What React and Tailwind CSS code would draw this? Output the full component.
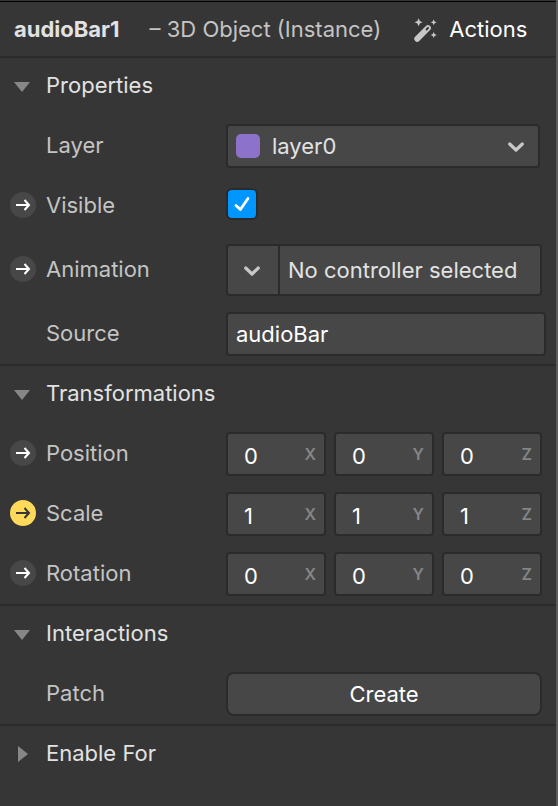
import React, { useState } from "react";

function Chevron() {
  return (
    <svg width="18" height="12" viewBox="0 0 18 12" fill="none" stroke="#c8c8c8" strokeWidth="3.2" strokeLinecap="round" strokeLinejoin="round" aria-hidden="true">
      <path d="M1.7 3L8 9L14.3 3" />
    </svg>
  );
}

function Triangle({ open }) {
  return (
    <svg width="16" height="16" viewBox="0 0 16 16" fill="#878787" aria-hidden="true">
      <path d={open ? "M0 4H16L8 14Z" : "M4 0V16L14 8Z"} />
    </svg>
  );
}

function MagicWand() {
  return (
    <svg width="24" height="24" viewBox="0 0 24 26" preserveAspectRatio="xMidYMin slice" overflow="visible" fill="#c8c8c8" aria-hidden="true">
      <path d="M5.6 1.2L6.8 4L9.5 5.2L6.8 6.4L5.6 9.2L4.4 6.4L1.6 5.2L4.4 4Z" />
      <path d="M20.7 2.3L21.6 4.4L23.7 5.3L21.6 6.2L20.7 8.3L19.8 6.2L17.7 5.3L19.8 4.4Z" />
      <path d="M20.7 15L21.6 17.1L23.7 18L21.6 18.9L20.7 21L19.8 18.9L17.7 18L19.8 17.1Z" />
      <path d="M4.2 21.9L15 11" stroke="#c8c8c8" strokeWidth="5.8" strokeLinecap="round" />
      <path d="M13.6 12.5L15.1 10.9" stroke="#363636" strokeWidth="2" strokeLinecap="round" />
    </svg>
  );
}

function PatchButton({ label, active }) {
  return (
    <button
      type="button"
      aria-label={`Patch ${label}`}
      className={`flex size-[26px] items-center justify-center rounded-full ${active ? "bg-[#ffd95a] text-[#363636]" : "bg-[#474747] text-white"}`}
    >
      <svg width="16" height="16" viewBox="0 0 16 16" fill="none" stroke="currentColor" strokeWidth="2" aria-hidden="true">
        <path d="M1 8H14M9.5 3L14 8L9.5 13" />
      </svg>
    </button>
  );
}

function Section({ title, open = true, last, children }) {
  return (
    <section className={last ? "" : "border-b-2 border-[#2b2b2b]"}>
      <h2>
        <button type="button" aria-expanded={open} className="flex h-14 w-full items-center gap-4 pl-3.5 text-left text-[#e2e2e2]">
          <Triangle open={open} />
          <span className="pb-0.5">{title}</span>
        </button>
      </h2>
      {open && <div className="pt-0.5">{children}</div>}
    </section>
  );
}

function Row({ label, id, patch, active, tall, children }) {
  return (
    <div className={`flex items-center ${tall ? "h-[68px]" : "h-15"}`}>
      <div className="flex w-[226px] shrink-0 items-center pb-0.5 pl-2.5">
        <div className="w-9 shrink-0">{patch && <PatchButton label={label} active={active} />}</div>
        <label htmlFor={id} className="text-[#c4c4c4]">{label}</label>
      </div>
      {children}
    </div>
  );
}

const FIELD = "rounded-sm border-2 border-[#2b2b2b] bg-[#474747]";

function Vector({ name, value }) {
  const [values, setValues] = useState([value, value, value]);
  return (
    <div className="mr-3.5 grid flex-1 grid-cols-3 gap-2">
      {["X", "Y", "Z"].map((axis, i) => (
        <div key={axis} className={`flex h-11 items-center pr-2 ${FIELD}`}>
          <input
            id={i === 0 ? name : undefined}
            aria-label={`${name} ${axis}`}
            value={values[i]}
            onChange={(e) => setValues(values.map((v, j) => (j === i ? e.target.value : v)))}
            className="h-full w-full min-w-0 flex-1 bg-transparent pt-1 pl-4 text-white outline-none"
          />
          <span className="text-base font-semibold text-[#858585]">{axis}</span>
        </div>
      ))}
    </div>
  );
}

export default function App() {
  const [visible, setVisible] = useState(true);
  const [source, setSource] = useState("audioBar");
  return (
    <main className="min-h-screen border-r-2 border-[#5c5c5c] bg-[#363636] pt-px font-['Inter',sans-serif] text-[22px] leading-7">
      <header className="flex h-[57px] items-center border-t border-b-2 border-t-black border-b-[#2b2b2b] pl-3.5 whitespace-nowrap">
        <h1 className="font-bold text-[#e2e2e2]">audioBar1</h1>
        <span className="ml-[30px] text-[#c4c4c4]">– 3D Object (Instance)</span>
        <button type="button" className="ml-8 flex items-center gap-3 text-white">
          <MagicWand />
          Actions
        </button>
      </header>

      <Section title="Properties">
        <Row label="Layer" id="layer">
          <div className="relative mr-4 flex-1">
            <select id="layer" className={`block h-11 w-full appearance-none pl-11 text-[#e2e2e2] ${FIELD}`}>
              <option>layer0</option>
            </select>
            <span className="pointer-events-none absolute inset-y-0 left-2.5 flex items-center">
              <span className="size-6 rounded-[5px] bg-[#8c72cb]" />
            </span>
            <span className="pointer-events-none absolute inset-y-0 right-3.5 flex items-center pt-0.5">
              <Chevron />
            </span>
          </div>
        </Row>
        <Row label="Visible" id="visible" patch>
          <div className="grid pb-1">
            <input
              id="visible"
              type="checkbox"
              checked={visible}
              onChange={(e) => setVisible(e.target.checked)}
              className="col-start-1 row-start-1 size-8 appearance-none rounded-md border-2 border-[#2b2b2b] bg-[#474747] checked:bg-[#0096ff]"
            />
            {visible && (
              <svg className="pointer-events-none col-start-1 row-start-1 size-8" viewBox="0 0 32 32" fill="none" stroke="#fff" strokeWidth="2.8" strokeLinecap="round" strokeLinejoin="round" aria-hidden="true">
                <path d="M10 17.5L14.4 21.5L22 10.5" />
              </svg>
            )}
          </div>
        </Row>
        <Row label="Animation" id="animation" patch tall>
          <div className={`mr-3.5 flex h-13 min-w-0 flex-1 items-stretch ${FIELD}`}>
            <button type="button" aria-label="Choose controller" className="flex w-[52px] shrink-0 items-center justify-center border-r-2 border-[#2b2b2b] pt-0.5">
              <Chevron />
            </button>
            <input id="animation" readOnly value="No controller selected" className="min-w-0 flex-1 bg-transparent pl-2 text-[#e2e2e2] outline-none" />
          </div>
        </Row>
        <Row label="Source" id="source">
          <input id="source" value={source} onChange={(e) => setSource(e.target.value)} className={`mr-2.5 h-11 min-w-0 flex-1 px-2 text-white outline-none ${FIELD}`} />
        </Row>
      </Section>

      <Section title="Transformations">
        <Row label="Position" id="Position" patch><Vector name="Position" value="0" /></Row>
        <Row label="Scale" id="Scale" patch active><Vector name="Scale" value="1" /></Row>
        <Row label="Rotation" id="Rotation" patch><Vector name="Rotation" value="0" /></Row>
      </Section>

      <Section title="Interactions">
        <Row label="Patch" id="patch">
          <button id="patch" type="button" className="mr-3.5 h-11 flex-1 rounded-lg border-2 border-[#2b2b2b] bg-[#474747] text-white">Create</button>
        </Row>
      </Section>

      <Section title="Enable For" open={false} last />
    </main>
  );
}
